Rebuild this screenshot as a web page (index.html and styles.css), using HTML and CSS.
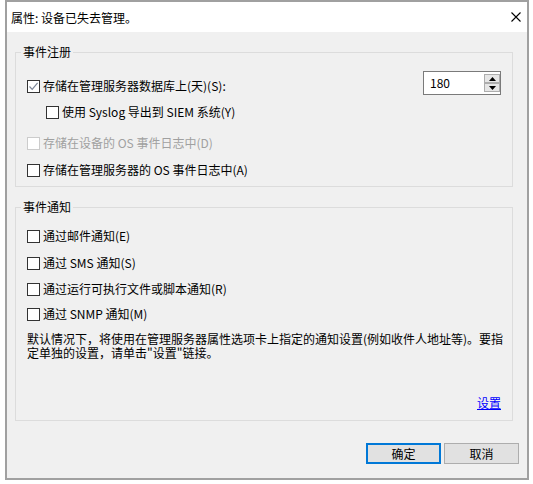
FILE: index.html
```html
<!DOCTYPE html>
<html lang="zh-CN">
<head>
<meta charset="utf-8">
<title>属性: 设备已失去管理。</title>
<link rel="stylesheet" href="styles.css">
</head>
<body>
<div class="window">
  <div class="titlebar">
    <span class="title">属性: 设备已失去管理。</span>
    <svg class="close" width="10" height="10" viewBox="0 0 10 10"><path d="M0.5 0.5 L9.5 9.5 M9.5 0.5 L0.5 9.5" stroke="#000" stroke-width="1.1" fill="none"/></svg>
  </div>
  <div class="content">
    <fieldset class="group g1">
      <legend>事件注册</legend>
      <div class="group-body b1">
        <div class="row-top">
          <label class="check first"><span class="box checked"><svg width="11" height="11" viewBox="0 0 11 11"><path d="M1.5 5.5 L4.2 8.3 L9.6 1.8" stroke="#7b8597" stroke-width="1.2" fill="none"/></svg></span><span>存储在管理服务器数据库上(天)(S):</span></label>
          <div class="spin">
            <span class="spin-value">180</span>
            <span class="spin-btns">
              <span class="spin-btn"><svg width="7" height="4" viewBox="0 0 7 4"><path d="M0 4 L3.5 0 L7 4 Z" fill="#000"/></svg></span>
              <span class="spin-btn"><svg width="7" height="4" viewBox="0 0 7 4"><path d="M0 0 L3.5 4 L7 0 Z" fill="#000"/></svg></span>
            </span>
          </div>
        </div>
        <label class="check sub"><span class="box"></span><span>使用 Syslog 导出到 SIEM 系统(Y)</span></label>
        <label class="check disabled"><span class="box"></span><span>存储在设备的 OS 事件日志中(D)</span></label>
        <label class="check r4"><span class="box"></span><span>存储在管理服务器的 OS 事件日志中(A)</span></label>
      </div>
    </fieldset>
    <fieldset class="group g2">
      <legend>事件通知</legend>
      <div class="group-body b2">
        <label class="check"><span class="box"></span><span>通过邮件通知(E)</span></label>
        <label class="check n2"><span class="box"></span><span>通过 SMS 通知(S)</span></label>
        <label class="check n3"><span class="box"></span><span>通过运行可执行文件或脚本通知(R)</span></label>
        <label class="check n4"><span class="box"></span><span>通过 SNMP 通知(M)</span></label>
        <p class="note">默认情况下，将使用在管理服务器属性选项卡上指定的通知设置(例如收件人地址等)。要指定单独的设置，请单击"设置"链接。</p>
        <div class="link-row"><a class="link" href="#">设置</a></div>
      </div>
    </fieldset>
    <div class="buttons">
      <button class="btn default">确定</button>
      <button class="btn">取消</button>
    </div>
  </div>
</div>
</body>
</html>
```
FILE: styles.css
```css
html, body {
  margin: 0;
  padding: 0;
  background: #ffffff;
}
body {
  font-family: "Noto Sans CJK SC", "Microsoft YaHei", sans-serif;
  font-size: 12px;
  color: #000;
}
.window {
  box-sizing: border-box;
  margin-left: 5px;
  width: 524px;
  height: 480px;
  border: 2px solid #a0a0a0;
  background: #f0f0f0;
  display: flex;
  flex-direction: column;
}
.titlebar {
  height: 30px;
  background: #ffffff;
  display: flex;
  align-items: center;
  justify-content: space-between;
  padding: 0 6px 0 4px;
  flex: none;
}
.title {
  font-size: 12px;
  line-height: 16px;
  padding-top: 1px;
}
.close {
  display: block;
}
.content {
  display: flex;
  flex-direction: column;
}
.group {
  margin: 12px 14px 0 8px;
  padding: 0;
  border: 1px solid #dcdcdc;
  min-width: 0;
}
.group legend {
  margin-left: 5px;
  padding: 0 2px;
  line-height: 16px;
  font-size: 12px;
}
.group-body {
  padding: 11px 11px 9px 11px;
}
.b2 {
  padding-top: 14px;
  padding-bottom: 10px;
}
.row-top {
  display: flex;
  justify-content: space-between;
  align-items: flex-start;
  height: 24px;
}
.check {
  display: flex;
  align-items: center;
  gap: 3px;
  height: 14px;
  line-height: 14px;
  white-space: nowrap;
}
.check.first {
  margin-top: 8px;
}
.check.sub {
  margin-top: 10px;
  margin-left: 19px;
}
.check.disabled {
  margin-top: 17px;
  color: #a0a0a0;
}
.check.disabled .box {
  border-color: #cccccc;
}
.check.r4 {
  margin-top: 13px;
}
.check.n2 {
  margin-top: 13px;
}
.check.n3 {
  margin-top: 12px;
}
.check.n4 {
  margin-top: 11px;
}
.box {
  box-sizing: border-box;
  width: 13px;
  height: 13px;
  border: 1px solid #333333;
  background: #ffffff;
  display: flex;
  align-items: center;
  justify-content: center;
  flex: none;
}
.box svg {
  display: block;
}
.spin {
  box-sizing: border-box;
  width: 78px;
  height: 24px;
  border: 1px solid #7a7a7a;
  background: #ffffff;
  display: flex;
  align-items: center;
}
.spin-value {
  flex: 1;
  padding-left: 6px;
  line-height: 14px;
}
.spin-btns {
  display: flex;
  flex-direction: column;
  width: 16px;
  height: 18px;
}
.spin-btn {
  box-sizing: border-box;
  height: 9px;
  border: 1px solid #adadad;
  background: #e6e6e6;
  display: flex;
  align-items: center;
  justify-content: center;
}
.spin-btn svg {
  display: block;
}
.note {
  margin: 11px 0 0 0;
  line-height: 14px;
  width: 486px;
}
.link-row {
  margin-top: 36px;
  line-height: 14px;
  text-align: right;
}
.link {
  color: #0000ff;
  text-decoration: underline;
}
.buttons {
  display: flex;
  justify-content: flex-end;
  gap: 3px;
  margin-top: 22px;
  padding-right: 8px;
}
.btn {
  box-sizing: border-box;
  width: 75px;
  height: 21px;
  border: 1px solid #adadad;
  background: #e1e1e1;
  font-family: "Noto Sans CJK SC", "Microsoft YaHei", sans-serif;
  font-size: 12px;
  line-height: 14px;
  color: #000;
  padding: 0;
}
.btn.default {
  border: 2px solid #0078d7;
}
```
